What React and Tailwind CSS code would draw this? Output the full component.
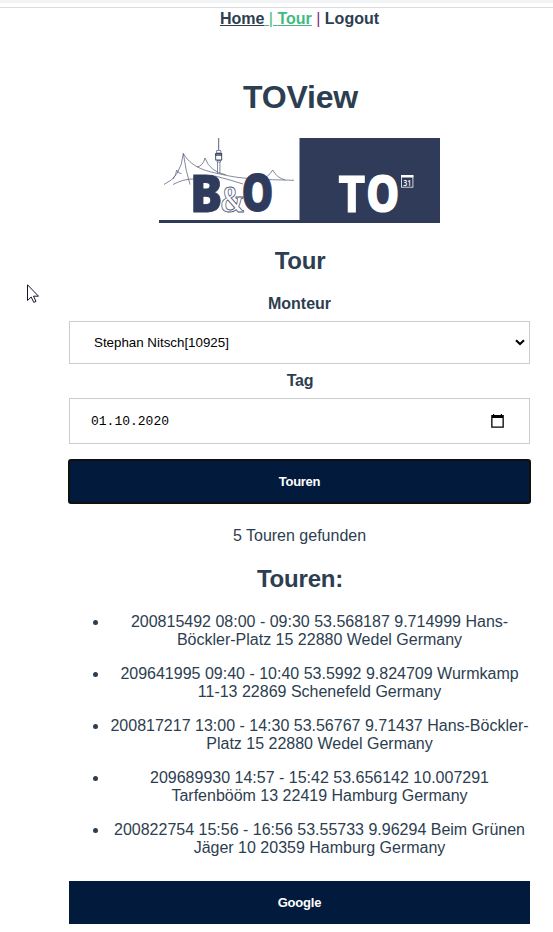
const tours = [
  "200815492 08:00 - 09:30 53.568187 9.714999 Hans-Böckler-Platz 15 22880 Wedel Germany",
  "209641995 09:40 - 10:40 53.5992 9.824709 Wurmkamp 11-13 22869 Schenefeld Germany",
  "200817217 13:00 - 14:30 53.56767 9.71437 Hans-Böckler-Platz 15 22880 Wedel Germany",
  "209689930 14:57 - 15:42 53.656142 10.007291 Tarfenbööm 13 22419 Hamburg Germany",
  "200822754 15:56 - 16:56 53.55733 9.96294 Beim Grünen Jäger 10 20359 Hamburg Germany",
];

function Logo() {
  return (
    <svg width="281" height="85" viewBox="0 0 281 85" className="mt-[22px] block font-['Open_Sans',sans-serif]">
      <g fill="none" stroke="#5a6280" strokeWidth="0.75">
        <path d="M5 46.5Q22 39 24.3 15.5Q27 34 31 46.5" />
        <path d="M24.3 15.5C34 32 52 34 68 37.5S104 41.5 135 42.3" />
        <path d="M14 46.5Q25 40.5 36 41" />
        <path d="M14 41Q17 38 17.7 32Q19.5 36 22.5 35.5" />
        <path d="M38 29Q44 28 46 20Q51 34 67 36.8" />
        <path d="M102 40.3Q109 40 113.7 32Q118 40 126 41.8" />
        <path d="M56 38Q72 42 84 46" />
        <path d="M58.5 24V35.5M60.9 24V35.5" />
        <path d="M57.6 12.5H61.8V15H57.6ZM58 22.5H61.5V24H58Z" />
      </g>
      <path d="M59.7 0V12" stroke="#5a6280" strokeWidth="1" />
      <rect x="56.7" y="15.5" width="6" height="6.5" fill="#fff" stroke="#2f3b59" strokeWidth="0.9" />
      <path d="M56.3 17H63" stroke="#2f3b59" strokeWidth="1.4" />
      <text x="61" y="73.8" fontSize="38" fontWeight="700" fill="#fff" stroke="#4a5373" strokeWidth="0.9" textLength="25" lengthAdjust="spacingAndGlyphs" className="font-['Liberation_Serif',serif]">&amp;</text>
      <g fontWeight="800" fill="#2f3b5c" stroke="#2f3b5c" strokeWidth="0.8">
        <text x="31" y="73.6" fontSize="51" textLength="32.5" lengthAdjust="spacingAndGlyphs">B</text>
        <text x="82.5" y="73.4" fontSize="50.5" textLength="32" lengthAdjust="spacingAndGlyphs">O</text>
      </g>
      <rect x="0" y="82" width="141" height="3" fill="#2f3b59" />
      <rect x="140.5" y="0" width="140.5" height="85" fill="#2f3b59" />
      <text x="179.6" y="73.7" fontSize="51" fontWeight="700" fill="#fff" stroke="#fff" strokeWidth="1.2" textLength="26.6" lengthAdjust="spacingAndGlyphs">T</text>
      <text x="206.8" y="73.6" fontSize="51" fontWeight="800" fill="#fff" textLength="34" lengthAdjust="spacingAndGlyphs">O</text>
      <rect x="242.5" y="37.8" width="11.4" height="11.4" fill="none" stroke="#e3e5ea" strokeWidth="0.9" />
      <rect x="242" y="37" width="12.4" height="2.5" fill="#fff" />
      <text x="244.2" y="47.7" fontSize="8" fontWeight="600" fill="#fff" textLength="8" lengthAdjust="spacingAndGlyphs">31</text>
    </svg>
  );
}

export default function App() {
  return (
    <div className="relative h-[932px] w-[553px] overflow-hidden bg-white font-['Liberation_Sans',Arial,sans-serif] text-[16px] leading-[18px] text-[#2c3e50]">
      <div className="h-[3px] bg-[#f1f3f4]" />
      <div className="mt-1 h-px bg-[#dadce0]" />
      <div className="ml-[69px] flex w-[461px] flex-col items-center text-center">
        <nav className="mt-[2px] whitespace-pre">
          <a className="text-[#42b983] underline"><span className="font-bold text-[#2c3e50] underline">Home</span> | <span className="font-bold">Tour</span></a>
          <span className="text-[#80307f]"> | </span>
          <span className="font-bold">Logout</span>
        </nav>
        <h1 className="mt-[51px] pl-0.5 text-[32px] leading-[37px] font-bold tracking-[-0.2px]">TOView</h1>
        <Logo />
        <h2 className="mt-6 pl-px text-[24px] leading-[27px] font-bold tracking-[-0.2px]">Tour</h2>
        <label className="mt-[21px] font-bold">Monteur</label>
        <div className="mt-2 flex h-[43px] w-full items-center justify-between border border-[#ccc] pr-[4px] pl-6 text-[13.333px] text-black">
          <span>Stephan Nitsch[10925]</span>
          <svg width="10" height="7" viewBox="0 0 10 7" fill="none" stroke="#000" strokeWidth="2"><path d="M1 1.2L5 5L9 1.2" /></svg>
        </div>
        <label className="mt-2 pl-px font-bold tracking-[-0.2px]">Tag</label>
        <div className="mt-2 flex h-[46px] w-full items-center justify-between border border-[#ccc] pr-[25px] pl-[21px] text-black">
          <span className="pt-0.5 font-['Liberation_Mono',monospace] text-[13px]">01.10.2020</span>
          <svg width="13" height="14" viewBox="0 0 13 14"><path d="M2 0H3.2V1H9.8V0H11V1H12.8V13.8H.2V1H2ZM1.5 4V12.6H11.5V4Z" fillRule="evenodd" /></svg>
        </div>
        <button className="mt-[15px] -mx-px h-[45px] w-[463px] shrink-0 rounded-[3px] border-2 border-[#101010] bg-[#021a3b] text-[13px] leading-[15px] font-bold tracking-[-0.3px] text-white">Touren</button>
        <p className="mt-[23px]">5 Touren gefunden</p>
        <h2 className="mt-5 pl-px text-[24px] leading-[27px] font-bold tracking-[-0.2px]">Touren:</h2>
        <ul className="mt-[21px] flex w-full list-disc flex-col gap-4 pl-10">
          {tours.map((tour) => (
            <li key={tour}>{tour}</li>
          ))}
        </ul>
        <button className="mt-6 h-[43px] w-full bg-[#021a3b] text-[13px] leading-[15px] font-bold tracking-[-0.2px] text-white">Google</button>
      </div>
      <svg className="absolute top-[284px] left-[27px]" width="13" height="20" viewBox="0 0 13 20" fill="#fff" stroke="#16162a" strokeWidth="1">
        <path d="M.5 .8V16.5L4.2 13L6.8 18.4L9 17.4L6.5 12.2H11.5Z" />
      </svg>
    </div>
  );
}
